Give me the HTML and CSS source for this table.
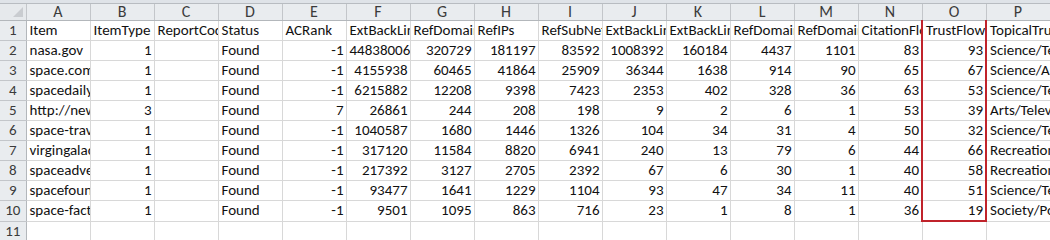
FILE: index.html
```html
<!DOCTYPE html>
<html>
<head>
<meta charset="utf-8">
<link rel="stylesheet" href="styles.css">
</head>
<body>
<div class="sheet">
  <div class="topbar"></div>
  <table class="grid">
    <colgroup>
      <col class="rh">
      <col class="c"><col class="c"><col class="c"><col class="c"><col class="c"><col class="c"><col class="c"><col class="c">
      <col class="c"><col class="c"><col class="c"><col class="c"><col class="c"><col class="c"><col class="c"><col class="c">
    </colgroup>
    <thead>
      <tr>
        <th class="corner"><span class="tri"></span></th>
        <th>A</th><th>B</th><th>C</th><th>D</th><th>E</th><th>F</th><th>G</th><th>H</th>
        <th>I</th><th>J</th><th>K</th><th>L</th><th>M</th><th>N</th><th>O</th><th>P</th>
      </tr>
    </thead>
    <tbody>
      <tr>
        <th>1</th>
        <td>Item</td><td>ItemType</td><td>ReportCode</td><td>Status</td><td>ACRank</td><td>ExtBackLinks</td><td>RefDomains</td><td>RefIPs</td>
        <td>RefSubNets</td><td>ExtBackLinksEDU</td><td>ExtBackLinksGOV</td><td>RefDomainsEDU</td><td>RefDomainsGOV</td><td>CitationFlow</td><td class="tf">TrustFlow</td><td>TopicalTrustFlow_Topic_0</td>
      </tr>
      <tr>
        <th>2</th>
        <td>nasa.gov</td><td class="n">1</td><td></td><td>Found</td><td class="n">-1</td><td class="n">44838006</td><td class="n">320729</td><td class="n">181197</td>
        <td class="n">83592</td><td class="n">1008392</td><td class="n">160184</td><td class="n">4437</td><td class="n">1101</td><td class="n">83</td><td class="n tf">93</td><td>Science/Technology</td>
      </tr>
      <tr>
        <th>3</th>
        <td>space.com</td><td class="n">1</td><td></td><td>Found</td><td class="n">-1</td><td class="n">4155938</td><td class="n">60465</td><td class="n">41864</td>
        <td class="n">25909</td><td class="n">36344</td><td class="n">1638</td><td class="n">914</td><td class="n">90</td><td class="n">65</td><td class="n tf">67</td><td>Science/Astronomy</td>
      </tr>
      <tr>
        <th>4</th>
        <td>spacedaily.com</td><td class="n">1</td><td></td><td>Found</td><td class="n">-1</td><td class="n">6215882</td><td class="n">12208</td><td class="n">9398</td>
        <td class="n">7423</td><td class="n">2353</td><td class="n">402</td><td class="n">328</td><td class="n">36</td><td class="n">63</td><td class="n tf">53</td><td>Science/Technology</td>
      </tr>
      <tr>
        <th>5</th>
        <td>http://news.com</td><td class="n">3</td><td></td><td>Found</td><td class="n">7</td><td class="n">26861</td><td class="n">244</td><td class="n">208</td>
        <td class="n">198</td><td class="n">9</td><td class="n">2</td><td class="n">6</td><td class="n">1</td><td class="n">53</td><td class="n tf">39</td><td>Arts/Television</td>
      </tr>
      <tr>
        <th>6</th>
        <td>space-travel.com</td><td class="n">1</td><td></td><td>Found</td><td class="n">-1</td><td class="n">1040587</td><td class="n">1680</td><td class="n">1446</td>
        <td class="n">1326</td><td class="n">104</td><td class="n">34</td><td class="n">31</td><td class="n">4</td><td class="n">50</td><td class="n tf">32</td><td>Science/Technology</td>
      </tr>
      <tr>
        <th>7</th>
        <td>virgingalactic.com</td><td class="n">1</td><td></td><td>Found</td><td class="n">-1</td><td class="n">317120</td><td class="n">11584</td><td class="n">8820</td>
        <td class="n">6941</td><td class="n">240</td><td class="n">13</td><td class="n">79</td><td class="n">6</td><td class="n">44</td><td class="n tf">66</td><td>Recreation/Travel</td>
      </tr>
      <tr>
        <th>8</th>
        <td>spaceadventures.com</td><td class="n">1</td><td></td><td>Found</td><td class="n">-1</td><td class="n">217392</td><td class="n">3127</td><td class="n">2705</td>
        <td class="n">2392</td><td class="n">67</td><td class="n">6</td><td class="n">30</td><td class="n">1</td><td class="n">40</td><td class="n tf">58</td><td>Recreation/Travel</td>
      </tr>
      <tr>
        <th>9</th>
        <td>spacefoundation.org</td><td class="n">1</td><td></td><td>Found</td><td class="n">-1</td><td class="n">93477</td><td class="n">1641</td><td class="n">1229</td>
        <td class="n">1104</td><td class="n">93</td><td class="n">47</td><td class="n">34</td><td class="n">11</td><td class="n">40</td><td class="n tf">51</td><td>Science/Technology</td>
      </tr>
      <tr>
        <th>10</th>
        <td>space-facts.com</td><td class="n">1</td><td></td><td>Found</td><td class="n">-1</td><td class="n">9501</td><td class="n">1095</td><td class="n">863</td>
        <td class="n">716</td><td class="n">23</td><td class="n">1</td><td class="n">8</td><td class="n">1</td><td class="n">36</td><td class="n tf last">19</td><td>Society/Politics</td>
      </tr>
      <tr>
        <th>11</th>
        <td></td><td></td><td></td><td></td><td></td><td></td><td></td><td></td>
        <td></td><td></td><td></td><td></td><td></td><td></td><td></td><td></td>
      </tr>
    </tbody>
  </table>
</div>
</body>
</html>
```

FILE: styles.css
```css
html, body {
  margin: 0;
  padding: 0;
  background: #ffffff;
  overflow: hidden;
}

.sheet {
  width: 1050px;
  height: 240px;
  overflow: hidden;
  font-family: Carlito, "Liberation Sans", Arial, sans-serif;
  font-size: 15px;
  color: #111111;
}

.topbar {
  height: 3px;
  background: #dfe3e8;
  border-bottom: 1px solid #b8bcc1;
}

.grid {
  width: 1050px;
  table-layout: fixed;
  border-collapse: collapse;
}

.grid col.rh { width: 26px; }
.grid col.c { width: 64px; }

.grid thead th {
  height: 16px;
  background: #e9ecef;
  color: #3b3b3b;
  font-weight: normal;
  text-align: center;
  border-right: 1px solid #c3c6ca;
  border-bottom: 1px solid #b3b7bb;
  padding: 0;
  font-size: 16px;
  line-height: 16px;
}

.grid thead th.corner {
  position: relative;
  background: #e6e9ec;
}

.tri {
  position: absolute;
  right: 3px;
  bottom: 3px;
  width: 0;
  height: 0;
  border-left: 10px solid transparent;
  border-bottom: 10px solid #c9ccd0;
}

.grid tbody th {
  height: 19px;
  background: #e9ecef;
  color: #3b3b3b;
  font-weight: normal;
  text-align: center;
  border-right: 1px solid #b3b7bb;
  border-bottom: 1px solid #c3c6ca;
  padding: 0;
  font-size: 15px;
  line-height: 19px;
}

.grid td {
  height: 19px;
  padding: 0 2px 0 3px;
  border-right: 1px solid #d8d8d8;
  border-bottom: 1px solid #d8d8d8;
  white-space: nowrap;
  overflow: hidden;
  text-overflow: clip;
  text-align: left;
  line-height: 19px;
}

.grid td.n {
  text-align: right;
}

.grid td.tf {
  border-left: 2px solid #c0232b;
  border-right: 2px solid #c0232b;
}

.grid td.tf.last {
  border-bottom: 2px solid #c0232b;
}
```
